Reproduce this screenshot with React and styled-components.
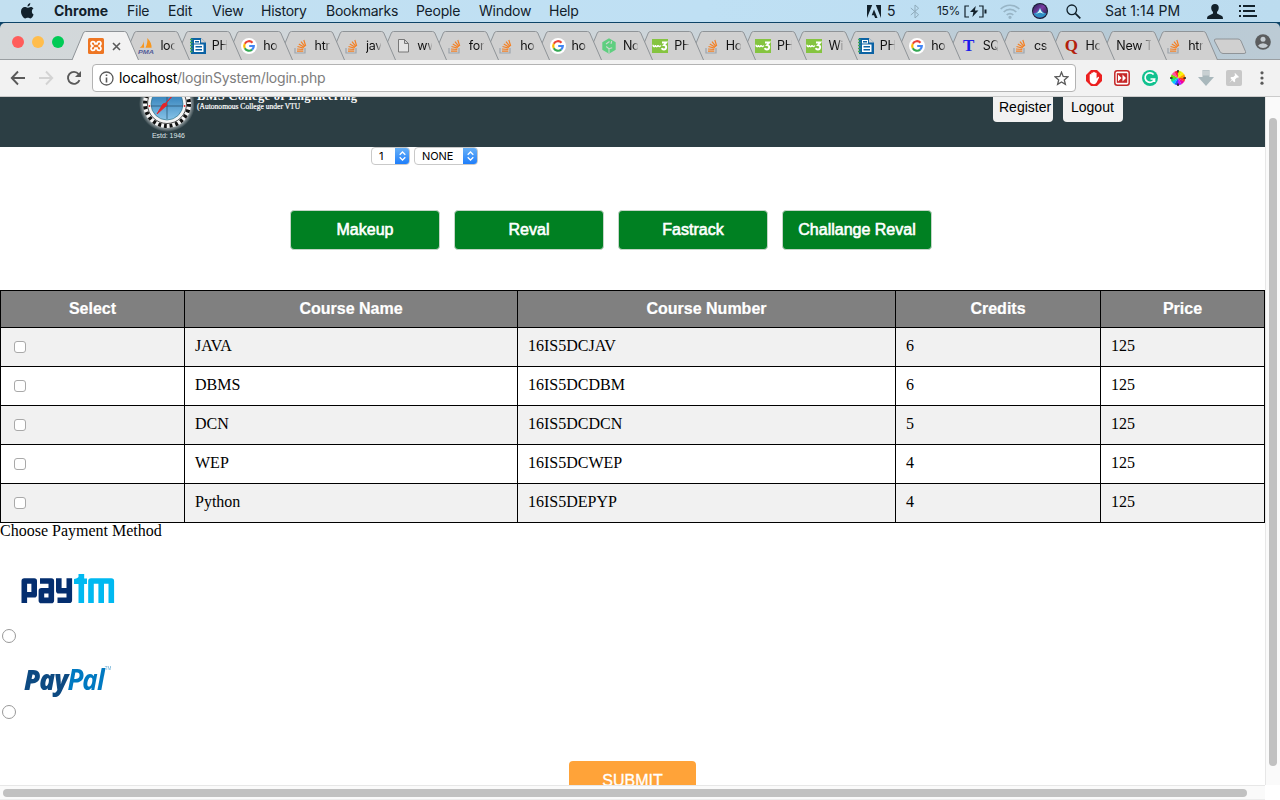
import React from "react";
import styled, { createGlobalStyle } from "styled-components";

const Global = createGlobalStyle`
  *{box-sizing:border-box}
  html,body{margin:0;padding:0;overflow:hidden;background:#fff}
  svg{display:block;flex:none}
`;
const ui = `"Inter","Roboto",sans-serif`;
const sans = `"Liberation Sans",Arial,sans-serif`;
const serif = `"Liberation Serif","Times New Roman",serif`;

const Screen = styled.div`
  width:1280px;height:800px;overflow:hidden;display:flex;flex-direction:column;background:#fff;
`;

/* system menu bar */
const MenuBar = styled.div`
  height:23px;flex:none;display:flex;align-items:center;padding-left:21px;
  background:linear-gradient(90deg,#c3e0f0,#bfe0f4 55%,#bcdcef);
  border-bottom:1px solid #0d4468;color:#12212b;font:400 14px/22px ${ui};
`;
const MenuItem = styled.span`
  width:${p => p.$w}px;flex:none;white-space:nowrap;font-weight:${p => (p.$bold ? 700 : 400)};
  letter-spacing:${p => p.$ls ?? -0.25}px;font-size:${p => p.$size || 14}px;
`;
const MenuIcon = styled.span`
  width:${p => p.$w}px;flex:none;display:flex;align-items:center;height:22px;
`;

/* tab strip */
const StripBack = styled.div`background:#0d4468;flex:none;`;
const TabStrip = styled.div`
  height:37px;display:flex;align-items:flex-start;padding:8px 0 0 12px;
  background:linear-gradient(90deg,#d3d8da,#cdd5da 50%,#b6cad6 85%,#bccbd5);
  border-bottom:1px solid #9a9fa2;border-radius:5px 5px 0 0;
`;
const Lights = styled.div`display:flex;gap:8px;width:60px;flex:none;padding-top:5px;`;
const Light = styled.i`width:12px;height:12px;flex:none;border-radius:50%;background:${p => p.$c};`;
const TabBox = styled.div`
  position:relative;z-index:${p => p.$z};width:51.4px;height:29px;flex:none;
  display:flex;align-items:center;padding:1px 0 0 ${p => (p.$active ? 16 : p.$plain ? 16.5 : 15)}px;
`;
const TabShape = styled.svg`position:absolute;left:0;top:0;z-index:-1;overflow:visible;`;
const TabLabel = styled.span`
  width:${p => (p.$plain ? 35 : 15)}px;margin-left:${p => (p.$plain ? 0 : 6)}px;flex:none;overflow:hidden;white-space:nowrap;
  font:400 12.5px/18px ${ui};letter-spacing:-.3px;color:#111;
  mask-image:linear-gradient(90deg,#000 ${p => (p.$plain ? 70 : 65)}%,transparent 105%);
`;
const NewTab = styled.svg`margin:7px 0 0 10px;`;
const Profile = styled.svg`margin:3px 0 0 8px;`;

/* toolbar */
const Toolbar = styled.div`
  height:37px;flex:none;display:flex;align-items:center;background:#f2f2f2;border-bottom:1px solid #cbcbcb;padding-left:10px;
`;
const NavIcon = styled.span`width:28px;flex:none;display:flex;&:last-of-type{width:26px}`;
const Address = styled.div`
  width:984px;height:28px;margin-right:10px;flex:none;display:flex;align-items:center;background:#fff;border:1px solid #b3b3b3;border-radius:4px;
  padding:0 6px;
`;
const Url = styled.span`
  flex:1;margin-left:5px;color:#7d7d7d;font:400 14px/26px ${ui};letter-spacing:-.2px;b{font-weight:400;color:#000}
`;
const Extensions = styled.div`display:flex;gap:12px;`;

/* browser viewport */
const Body = styled.div`flex:1;display:flex;min-height:0;`;
const Main = styled.div`width:1265px;display:flex;flex-direction:column;`;
const Page = styled.div`height:688px;flex:none;overflow:hidden;background:#fff;font:16px/18px ${serif};color:#000;`;
const VScroll = styled.div`
  width:15px;height:688px;background:#fafafa;border-left:1px solid #e7e7e7;padding:21px 0 0 3px;
  &::after{content:"";display:block;width:8px;height:648px;border-radius:4px;background:#c1c1c1}
`;
const HScroll = styled.div`
  height:15px;background:#fafafa;border-top:1px solid #e7e7e7;border-bottom:1px solid #ececec;padding:3px 0 0 3px;
  &::after{content:"";display:block;width:1244px;height:8px;border-radius:4px;background:#c1c1c1}
`;

const Banner = styled.header`
  height:50px;background:#2c3e44;display:flex;align-items:flex-start;overflow:hidden;padding-left:138px;
`;
const BannerText = styled.div`
  width:796px;margin:-9px 0 0 3px;color:#fff;
  h1{margin:0;font:700 12.500px/16px ${serif};letter-spacing:.33px;white-space:nowrap}
  p{margin:-4px 0 0;font:400 7.500px/13px ${serif};letter-spacing:.02px;-webkit-text-stroke:.2px #fff;white-space:nowrap}
`;
const BannerButton = styled.button`
  width:60px;height:40px;margin:-15px 10px 0 0;padding:10px 0 0 6px;border:0;border-radius:4px;background:#f2f2f2;color:#000;
  text-align:left;font:14px/30px ${sans};white-space:nowrap;
  &:last-child{padding-left:8px}
`;
const Filters = styled.div`display:flex;gap:4px;padding:0 0 0 371px;height:64px;`;
const Select = styled.div`
  width:${p => p.$w}px;height:18px;display:flex;justify-content:space-between;border:1px solid #c9c9c9;border-radius:4px;overflow:hidden;
  font:400 11px/17px ${ui};padding-left:7px;background:#fff;letter-spacing:-.1px;
`;
const Stepper = styled.span`
  width:15px;height:18px;margin:-1px -1px 0 0;display:flex;align-items:center;justify-content:center;
  background:linear-gradient(#6db4f7,#1a7bfb);
`;
const Actions = styled.div`display:flex;gap:14px;padding-left:290px;height:79px;`;
const Action = styled.button`
  width:150px;height:40px;margin-top:-1px;padding:0;border:1px solid #c5d5c8;border-radius:4px;background:#008022;color:#fff;
  font:16px/20px ${sans};-webkit-text-stroke:.6px #fff;
`;
const Table = styled.table`
  width:1265px;table-layout:fixed;border-collapse:collapse;
  th,td{border:1px solid #000}
  th{height:37px;padding:0 0 1px;background:#808080;color:#fff;font:700 16px/20px ${sans};-webkit-text-stroke:.2px #fff}
  td{height:39px;padding:0 10px 3px;text-align:left}
  tbody tr:nth-child(odd){background:#f1f1f1}
`;
const Check = styled.input.attrs({ type: "checkbox" })`
  appearance:none;display:block;width:12px;height:12px;margin:3px 0 0 3px;border:1px solid #a9a9a9;border-radius:3px;background:#fff;
`;
const Radio = styled.input.attrs({ type: "radio" })`
  appearance:none;display:block;width:14px;height:14px;margin:0 0 0 2px;border:1px solid #999;border-radius:50%;background:#fff;
`;
const Heading = styled.div`height:18px;margin:-1px 0 32px;`;
const PayOption = styled.label`display:block;height:${p => p.$h}px;`;
const PayLogo = styled.div`height:${p => p.$h}px;padding-left:${p => p.$x}px;`;
const Submit = styled.button`
  display:block;width:127px;height:38px;margin:0 0 0 569px;border:0;border-radius:4px;background:#ffa339;color:#fff;
  font:16px/37px ${sans};padding:0 0 0;-webkit-text-stroke:.3px #fff;
`;

/* favicons */
const StackIcon = () => (
  <svg width="16" height="16" viewBox="0 0 16 16" fill="none">
    <path d="M2 10v5h10v-5" stroke="#9da5ad" strokeWidth="1.2" />
    <path d="M4 13.2h6.3M4 11l6.3.5M4.5 8.5l6 1.6M5.8 6l5.4 3.2M8 3.6l4 5M10.8 2l1.9 6" stroke="#f48024" strokeWidth="1.2" />
  </svg>
);
const GoogleIcon = () => (
  <svg width="16" height="16" viewBox="0 0 16 16" fill="none" strokeWidth="2.2">
    <circle cx="8" cy="8" r="8" fill="#fff" />
    <path d="M11.5 4.7A4.8 4.8 0 0 0 3.8 5.7" stroke="#ea4335" />
    <path d="M3.8 5.7a4.8 4.8 0 0 0 0 4.6" stroke="#fbbc05" />
    <path d="M3.8 10.3a4.8 4.8 0 0 0 7.3 1.3" stroke="#34a853" />
    <path d="M11.1 11.6A4.8 4.8 0 0 0 12.8 8H8.2" stroke="#4285f4" />
  </svg>
);
const DocIcon = () => (
  <svg width="16" height="16" viewBox="0 0 16 16">
    <path d="M1 0h10l5 4.500V16H1z" fill="#0b62a4" />
    <path d="M0 1.500h2.500M0 4.500h2.500M0 7.500h2.500M0 10.500h2.500M0 13.500h2.500" stroke="#42a657" strokeWidth="1.600" />
    <path d="M4 2h6v3.500H4zM4 6.500h9.500v7.500H4z" fill="#fff" />
    <path d="M5 3.800h4M5.500 8.700H12M5.500 11.700H12" stroke="#0b62a4" strokeWidth="1.400" />
    <path d="M11 0v4.500h5z" fill="#d0d0d0" />
  </svg>
);
const W3Icon = () => (
  <svg width="16" height="16" viewBox="0 0 16 16">
    <rect y="1" width="16" height="14" fill="#85c440" />
    <path d="M1 6.800c.2 2.500 2.200 2.300 2.400.2.3 2.300 2.400 2.300 2.600 0 .3 1.900 2 2 2.800.5" stroke="#fff" strokeWidth="1.500" fill="none" />
    <path d="M10 4.500h4.200L12 7.100c3.300.2 2.500 4.500-.2 4.400-1.200 0-1.800-.6-2.100-1.400" stroke="#fff" strokeWidth="1.900" fill="none" />
  </svg>
);
const XamppIcon = () => (
  <svg width="16" height="16" viewBox="0 0 16 16">
    <rect width="16" height="16" rx="1.500" fill="#ee7623" />
    <path d="M5.600 8C2.300 7.500 2.300 3.700 4.800 3.700 6.500 3.700 7 4.600 7 5.800h2c0-1.200.5-2.100 2.200-2.100 2.500 0 2.500 3.800-.8 4.300 3.300.5 3.300 4.300.8 4.300C9.500 12.300 9 11.400 9 10.200H7c0 1.200-.5 2.100-2.200 2.100-2.500 0-2.500-3.800.8-4.300z" fill="none" stroke="#fff" strokeWidth="1.700" />
  </svg>
);
const PmaIcon = () => (
  <svg width="16" height="16" viewBox="0 0 16 16">
    <path d="M5.500 1.500c.5 3-.8 6.500-3.800 8.300h4.500zM9.300 0c3.300 3.300 4.500 6.700 4.300 9.800H7.500C9 6.800 9.700 3.500 9.300 0z" fill="#f7961e" />
    <text x="0" y="15.800" fontFamily="Liberation Sans" fontStyle="italic" fontWeight="700" fontSize="6.200" textLength="16" lengthAdjust="spacingAndGlyphs" fill="#555c99">PMA</text>
  </svg>
);
const FileIcon = () => (
  <svg width="16" height="16" viewBox="0 0 16 16" fill="#e4e4e4" stroke="#777">
    <path d="M3.500 1.500h6l4 4v8.500h-10zM9.500 1.500v4h4" />
  </svg>
);
const TreehouseIcon = () => (
  <svg width="16" height="16" viewBox="0 0 16 16">
    <path d="M8 .3l6.700 3.900v7.600L8 15.700l-6.700-3.900V4.200z" fill="#5fcf80" />
    <path d="M8 15.500v-4.800L5.200 8.500M8 10.700l3.200-1M5 6l3.500-2.500M10 5.800l.7-2.800" stroke="#cdd8cf" strokeWidth="1.100" fill="none" />
  </svg>
);
const Glyph = styled.span`
  width:16px;flex:none;text-align:center;font:700 ${p => p.$s}px/16px ${serif};color:${p => p.$c};
`;

const icons = {
  stack: <StackIcon />, google: <GoogleIcon />, doc: <DocIcon />, w3: <W3Icon />, xampp: <XamppIcon />,
  pma: <PmaIcon />, file: <FileIcon />, tree: <TreehouseIcon />,
  t: <Glyph $s={17} $c="#1b1bea">T</Glyph>, q: <Glyph $s={17} $c="#b3200c">Q</Glyph>,
};
const tabs = [
  ["xampp", null], ["pma", "loc"], ["doc", "PHP"], ["google", "ho"], ["stack", "htm"], ["stack", "jav"], ["file", "ww"],
  ["stack", "for"], ["stack", "ho"], ["google", "ho"], ["tree", "No"], ["w3", "PHP"], ["stack", "Ho"], ["w3", "PHP"],
  ["w3", "Wi"], ["doc", "PHP"], ["google", "ho"], ["t", "SQ"], ["stack", "cs"], ["q", "Ho"], [null, "New T"], ["stack", "htm"],
];

const CloseIcon = styled.svg`margin-left:8px;`;

function Tab({ icon, label, index }) {
  const active = index === 0;
  const plain = !icon;
  const fill = active ? "#f2f2f2" : "#d0d0d0";
  return (
    <TabBox $z={40 - index} $active={active} $plain={plain}>
      <TabShape width="67" height="29" viewBox="0 0 67 29">
        <path d="M0 29L11.300 2Q12 .5 13.500 .5H52.500Q54 .5 54.800 2L66.500 29" fill={fill} stroke="#8f9498" />
      </TabShape>
      {icons[icon]}
      {active ? (
        <CloseIcon width="9" height="9" viewBox="0 0 9 9"><path d="M1 1l7 7M8 1L1 8" stroke="#5a5a5a" strokeWidth="1.600" /></CloseIcon>
      ) : (
        <TabLabel $plain={plain}>{label}</TabLabel>
      )}
    </TabBox>
  );
}

function SystemMenu() {
  return (
    <MenuBar>
      <MenuIcon $w={33}>
        <svg width="13" height="16" viewBox="0 0 13 16" fill="#12212b">
          <path d="M9.300 0c.1 1.800-1.100 3.400-2.800 3.500C6.300 1.800 7.700.3 9.300 0zM12.600 11.500c-.7 2-1.900 3.900-3.200 3.900-1 0-1.400-.6-2.600-.6s-1.700.6-2.600.6C2.300 15.400 0 11.600 0 8.500c0-2.900 1.900-4.500 3.700-4.500 1.200 0 2.100.7 2.900.7.7 0 1.800-.8 3.200-.8 1.200 0 2.100.6 2.700 1.500-2.300 1.300-2 4.900.1 6.100z" />
        </svg>
      </MenuIcon>
      <MenuItem $w={73} $bold $ls={0}>Chrome</MenuItem>
      <MenuItem $w={41}>File</MenuItem>
      <MenuItem $w={44}>Edit</MenuItem>
      <MenuItem $w={49}>View</MenuItem>
      <MenuItem $w={65}>History</MenuItem>
      <MenuItem $w={90}>Bookmarks</MenuItem>
      <MenuItem $w={63}>People</MenuItem>
      <MenuItem $w={70}>Window</MenuItem>
      <MenuItem $w={318}>Help</MenuItem>
      <MenuIcon $w={20}>
        <svg width="14" height="13" viewBox="0 0 14 13" fill="#12212b"><path d="M0 0h5.200L0 13zM8.800 0H14v13zM7 4.600L10.500 13H8.100L7 10.300H4.700z" /></svg>
      </MenuIcon>
      <MenuItem $w={23}>5</MenuItem>
      <MenuIcon $w={27}>
        <svg width="10" height="15" viewBox="0 0 10 15" fill="none" stroke="#8fabbb"><path d="M.8 4l7.800 6.700L5 14V1l3.600 3.200L.8 11" /></svg>
      </MenuIcon>
      <MenuItem $w={27} $size={12} $ls={-0.3}>15%</MenuItem>
      <MenuIcon $w={36}>
        <svg width="23" height="13" viewBox="0 0 23 13" fill="none" stroke="#12212b" strokeWidth="1.200">
          <path d="M5 1H1v11h4M15 1h4v11h-4" /><path d="M11.800 1L6 7h3.400l-1 5 6-6.500h-3.500z" fill="#12212b" stroke="none" /><path d="M21.500 4.500v4" strokeWidth="2" />
        </svg>
      </MenuIcon>
      <MenuIcon $w={32}>
        <svg width="20" height="15" viewBox="0 0 20 15" fill="none" stroke="#98b5c6" strokeWidth="1.700">
          <path d="M.7 5c5.200-5 13.400-5 18.600 0M3.700 8c3.500-3.400 9-3.400 12.600 0M6.700 11c1.800-1.800 4.800-1.800 6.600 0" /><circle cx="10" cy="13.300" r=".8" fill="#98b5c6" />
        </svg>
      </MenuIcon>
      <MenuIcon $w={34}>
        <svg width="16" height="16" viewBox="0 0 16 16">
          <defs>
            <linearGradient id="siri" x2="1" y2="1"><stop stopColor="#20204f" /><stop offset=".45" stopColor="#7a3ca5" /><stop offset="1" stopColor="#101d38" /></linearGradient>
          </defs>
          <circle cx="8" cy="8" r="8" fill="#141a30" /><circle cx="8" cy="8" r="7" fill="url(#siri)" />
          <path d="M1.500 10.500q4-.5 6.500-5.500 2.500 5 6.500 5.500-2 4-6.500 4t-6.500-4z" fill="#2d8fc4" /><path d="M3.500 11Q7 9.500 8 5q1 4.500 4.500 6L8 9.500z" fill="#e9fbff" />
        </svg>
      </MenuIcon>
      <MenuIcon $w={39}>
        <svg width="15" height="15" viewBox="0 0 15 15" fill="none" stroke="#12212b" strokeWidth="1.300"><circle cx="5.800" cy="5.800" r="4.800" /><path d="M9.300 9.300l5 5" strokeWidth="1.700" /></svg>
      </MenuIcon>
      <MenuItem $w={102} $ls={-0.02}>Sat 1:14 PM</MenuItem>
      <MenuIcon $w={32}>
        <svg width="16" height="15" viewBox="0 0 16 15" fill="#12212b"><path d="M8 0c5 0 4.300 6 2 8v1.600L15 12q1 .7 1 3H0q0-2.300 1-3l5-2.400V8C3.700 6 3 0 8 0z" /></svg>
      </MenuIcon>
      <svg width="18" height="12" viewBox="0 0 18 12" stroke="#12212b" strokeWidth="1.800"><path d="M0 1h2M4 1h12M0 6h2M4 6h12M0 11h2M4 11h14" /></svg>
    </MenuBar>
  );
}

function BrowserBar() {
  return (
    <Toolbar>
      <NavIcon><svg width="16" height="16" viewBox="0 0 16 16" fill="none" stroke="#5a5a5a" strokeWidth="1.900"><path d="M15 8H2M8 1.500L1.800 8 8 14.500" /></svg></NavIcon>
      <NavIcon><svg width="16" height="16" viewBox="0 0 16 16" fill="none" stroke="#d3d3d3" strokeWidth="1.900"><path d="M1 8h13M8 1.500L14.200 8 8 14.500" /></svg></NavIcon>
      <NavIcon><svg width="16" height="16" viewBox="0 0 16 16" fill="none" stroke="#5a5a5a" strokeWidth="1.900"><path d="M13.500 10.200A6 6 0 1 1 12.600 4L14 5.500" /><path d="M15 1v6H9z" fill="#5a5a5a" stroke="none" /></svg></NavIcon>
      <Address>
        <svg width="15" height="15" viewBox="0 0 15 15" fill="none" stroke="#5a5a5a" strokeWidth="1.300"><circle cx="7.500" cy="7.500" r="6.500" /><path d="M7.500 6.500v5M7.500 3.500v1.600" strokeWidth="1.600" /></svg>
        <Url><b>localhost</b>/loginSystem/login.php</Url>
        <svg width="15" height="15" viewBox="0 0 15 15" fill="none" stroke="#5a5a5a" strokeWidth="1.300"><path d="M7.500 1.200l1.700 4.300 4.600.4-3.500 3 1.100 4.500-3.900-2.400-3.900 2.400 1.100-4.500-3.500-3 4.600-.4z" /></svg>
      </Address>
      <Extensions>
        <svg width="16" height="16" viewBox="0 0 16 16"><path d="M5 0h6l5 5v6l-5 5H5l-5-5V5z" fill="#ec2020" /><path d="M3.700 8V4.500q.8-1 1.600 0V3q.8-1 1.800 0v-.8q.8-1 1.800 0V3q.8-1 1.700 0v5.500l1.500-1.700q1.200 0 .9.9l-2.400 4.800Q9.700 14.200 8 14.200c-3 0-4.300-2-4.300-4.200z" fill="#fff" /></svg>
        <svg width="16" height="16" viewBox="0 0 16 16"><rect x=".8" y=".8" width="14.400" height="14.400" rx="2.500" fill="#fff" stroke="#c62828" strokeWidth="1.500" /><rect x="2.800" y="3.200" width="10.400" height="9.600" fill="#c62828" /><path d="M4 4.500L7.500 8 4 11.500zM8.500 4.500L12 8l-3.500 3.500z" fill="#fff" /></svg>
        <svg width="16" height="16" viewBox="0 0 16 16"><circle cx="8" cy="8" r="8" fill="#11c28f" /><path d="M11.600 4.500A4.800 4.800 0 1 0 12.500 9H8.500M12.500 9v3" stroke="#fff" strokeWidth="1.700" fill="none" /></svg>
        <svg width="16" height="16" viewBox="0 0 16 16">
          {["#fff000", "#ff9d00", "#ff3b20", "#f000a0", "#b21cff", "#304cff", "#00c8ff", "#22df70", "#6fe000", "#ff50a0", "#ff2040", "#d8f000"].map((c, i) => (
            <path key={c} d="M8 8L6.100 1Q8 .5 9.900 1z" fill={c} transform={`rotate(${i * 30 + 45} 8 8)`} />
          ))}
          <path d="M8 0v2.500M8 13.500V16M0 8h2.500M13.500 8H16" stroke="#222" strokeWidth="1.500" />
        </svg>
        <svg width="16" height="16" viewBox="0 0 16 16"><path d="M4.500 0h7v7H16l-8 9-8-9h4.500z" fill="#a9b8bc" /><path d="M5 .5h6v5H5z" fill="#c8d0d2" /></svg>
        <svg width="16" height="16" viewBox="0 0 16 16"><rect width="16" height="16" rx="2" fill="#c8c8c8" /><path d="M9 3l4 4-1 .7-1-.3-2 2 .2 2-1 .8-2-2L3.300 13l2.500-3.500-1.500-1.600 1-1 2 .2 2-2L8.500 4z" fill="#fff" /></svg>
        <svg width="16" height="16" viewBox="0 0 16 16" fill="#5a5a5a"><circle cx="8" cy="2.800" r="1.600" /><circle cx="8" cy="8" r="1.600" /><circle cx="8" cy="13.200" r="1.600" /></svg>
      </Extensions>
    </Toolbar>
  );
}

const Crest = () => (
  <svg width="56" height="50" viewBox="0 0 56 50">
    <defs>
      <radialGradient id="halo"><stop offset=".82" stopColor="#fff" stopOpacity=".6" /><stop offset="1" stopColor="#fff" stopOpacity="0" /></radialGradient>
      <linearGradient id="sky" x2="0" y2="1"><stop stopColor="#1d6fae" /><stop offset="1" stopColor="#86c3e8" /></linearGradient>
    </defs>
    <circle cx="29" cy="7" r="28" fill="url(#halo)" />
    <circle cx="29" cy="7" r="24" fill="#f4f4f4" />
    <circle cx="29" cy="7" r="22" fill="none" stroke="#111" strokeWidth="4" strokeDasharray="2.880 2.880" />
    <circle cx="29" cy="7" r="19.500" fill="#f4f4f4" stroke="#222" strokeWidth=".8" />
    <circle cx="29" cy="7" r="16" fill="url(#sky)" stroke="#267" strokeWidth=".6" />
    <path d="M13 9h32M29 0v22" stroke="#244b67" strokeWidth=".7" />
    <path d="M36-3L28 6l1 2-10 9 6-10 3-1z" fill="#e52429" stroke="#e52429" />
    <circle cx="11.500" cy="9" r=".9" fill="#e52429" /><circle cx="46.500" cy="9" r=".9" fill="#e52429" />
    <text x="14" y="40.800" fontFamily="Liberation Sans" fontSize="7" textLength="33" fill="#dfe5e7">Estd: 1946</text>
  </svg>
);
const Arrows = () => (
  <Stepper><svg width="7" height="10" viewBox="0 0 7 10" fill="none" stroke="#fff" strokeWidth="1.300"><path d="M.7 3.700l2.800-2.700 2.800 2.700M.7 6.300l2.800 2.700 2.800-2.700" /></svg></Stepper>
);
const Paytm = () => (
  <svg width="96" height="34" viewBox="0 0 96 34" fill="none" strokeWidth="5.600" strokeLinejoin="round">
    <g stroke="#042e6f">
      <path d="M4.300 31V9H14.200V22.800H5" />
      <path d="M20 9H31.300V28.400H21.400V18.800H30" />
      <path d="M38.800 6.300V18.800H48M49.300 6.300V28.300H37.500" />
    </g>
    <g stroke="#00b9f1">
      <path d="M61.300 2V31" />
      <path d="M71 31V9H91.300V31M81.200 9V31" />
    </g>
    <path d="M54 7q4.500-.5 7.300-5h2.800v4.500H67V12H54z" fill="#00b9f1" />
  </svg>
);
const WordMark = styled.span`
  display:flex;width:100px;font:italic 700 28px/38px "Open Sans","Noto Sans",sans-serif;letter-spacing:-1px;color:#0079c1;
  transform:scaleX(.93);transform-origin:0 0;
  b{color:#0d4a82}
  small{font:400 5px/17px ${sans};letter-spacing:0;color:#6aaed6;margin-left:1px}
`;

const courses = [
  ["JAVA", "16IS5DCJAV", 6, 125], ["DBMS", "16IS5DCDBM", 6, 125], ["DCN", "16IS5DCDCN", 5, 125],
  ["WEP", "16IS5DCWEP", 4, 125], ["Python", "16IS5DEPYP", 4, 125],
];

export default function App() {
  return (
    <Screen>
      <Global />
      <SystemMenu />
      <StripBack>
        <TabStrip>
          <Lights><Light $c="#ff5d5b" /><Light $c="#ffbd4c" /><Light $c="#00cb56" /></Lights>
          {tabs.map(([icon, label], i) => <Tab key={i} icon={icon} label={label} index={i} />)}
          <NewTab width="34" height="17" viewBox="0 0 34 17"><path d="M3 1h22q2 0 3 2l4.500 10.500q1 2-1.500 2H10q-2 0-3-2L1.500 3Q.8 1 3 1z" fill="#d0d0d0" stroke="#8f9498" /></NewTab>
          <Profile width="16" height="16" viewBox="0 0 16 16"><circle cx="8" cy="8" r="7.800" fill="#5b5d5f" /><circle cx="8" cy="5.200" r="2.500" fill="#c4ccd2" /><path d="M3 11.700q1.500-2.500 5-2.500t5 2.500q-2 2.300-5 2.300t-5-2.300z" fill="#c4ccd2" /></Profile>
        </TabStrip>
      </StripBack>
      <BrowserBar />
      <Body>
        <Main>
          <Page>
            <Banner>
              <Crest />
              <BannerText><h1>BMS College of Engineering</h1><p>(Autonomous College under VTU</p></BannerText>
              <BannerButton>Register</BannerButton>
              <BannerButton>Logout</BannerButton>
            </Banner>
            <Filters>
              <Select $w={39}>1<Arrows /></Select>
              <Select $w={64}>NONE<Arrows /></Select>
            </Filters>
            <Actions>
              {["Makeup", "Reval", "Fastrack", "Challange Reval"].map(t => <Action key={t}>{t}</Action>)}
            </Actions>
            <Table>
              <colgroup><col width="184" /><col width="333" /><col width="378" /><col width="205" /><col width="164" /></colgroup>
              <thead><tr>{["Select", "Course Name", "Course Number", "Credits", "Price"].map(h => <th key={h}>{h}</th>)}</tr></thead>
              <tbody>
                {courses.map(row => (
                  <tr key={row[0]}><td><Check /></td>{row.map((v, i) => <td key={i}>{v}</td>)}</tr>
                ))}
              </tbody>
            </Table>
            <Heading>Choose Payment Method</Heading>
            <PayOption $h={88}><PayLogo $h={57} $x={20}><Paytm /></PayLogo><Radio name="pay" /></PayOption>
            <PayOption $h={101}><PayLogo $h={45} $x={24}><WordMark><b>Pay</b>Pal<small>TM</small></WordMark></PayLogo><Radio name="pay" /></PayOption>
            <Submit>SUBMIT</Submit>
          </Page>
          <HScroll />
        </Main>
        <VScroll />
      </Body>
    </Screen>
  );
}
